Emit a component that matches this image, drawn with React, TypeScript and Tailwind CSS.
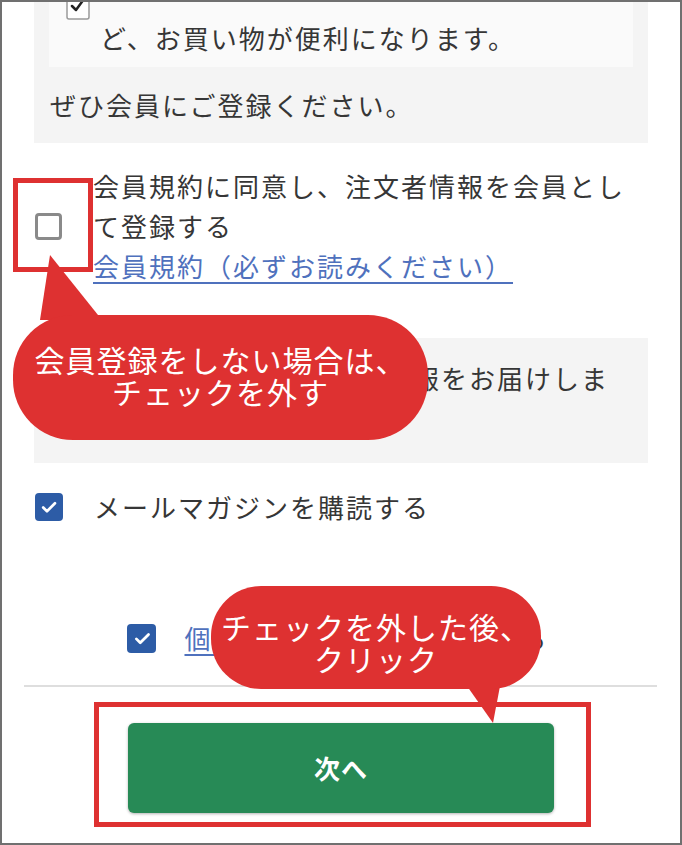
import type { ReactNode } from "react";

function CheckedBox({ size }: { size: string }) {
  return (
    <span className={`flex shrink-0 items-center justify-center rounded-[4px] bg-[#2d5ca6] ${size}`}>
      <svg viewBox="0 0 24 24" className="h-[72%] w-[72%]" fill="none" stroke="white" strokeWidth="3.2" strokeLinecap="round" strokeLinejoin="round">
        <path d="M5 12.5l4.5 4.5L19 7.5" />
      </svg>
    </span>
  );
}

function Callout({ className, children }: { className: string; children: ReactNode }) {
  return (
    <div
      className={`absolute flex flex-col items-center justify-center bg-[#de3131] text-center text-[30px] font-normal leading-[32px] tracking-[1px] text-white ${className}`}
    >
      {children}
    </div>
  );
}

export default function App() {
  return (
    <div className="relative h-[845px] w-[682px] overflow-hidden border-2 border-[#707070] bg-white font-['Noto_Sans_CJK_JP','Noto_Sans',sans-serif] text-[26px] leading-[40px] tracking-[2px] text-[#363636]">
      {/* member benefits box */}
      <section className="mx-[32px] -mt-[16px] bg-[#f4f4f4] px-[15px] pb-[18px]">
        <div className="bg-[#fafafa] pb-[9px] pt-[8px]">
          <div className="-mb-[2px] ml-[17px] h-[26px] w-[24px] overflow-hidden">
            <svg viewBox="0 0 24 26" className="h-[26px] w-[24px]" fill="none">
              <rect x="1" y="1" width="22" height="24" rx="2" fill="white" stroke="#9a9a9a" strokeWidth="1.5" />
              <path d="M6 12l4 4 8-11" stroke="#222" strokeWidth="2.5" strokeLinecap="round" strokeLinejoin="round" />
            </svg>
          </div>
          <p className="pl-[51px]">ど、お買い物が便利になります。</p>
        </div>
        <p className="mt-[18px] pl-[1px]">ぜひ会員にご登録ください。</p>
      </section>

      {/* member registration */}
      <div className="mt-[23px] flex items-center gap-[31px] pl-[33px]">
        <span className="h-[27px] w-[27px] shrink-0 rounded-[4px] border-[3px] border-[#8a8a8a] bg-white" />
        <div className="w-[545px]">
          <p>会員規約に同意し、注文者情報を会員として登録する</p>
          <a className="block w-fit text-[#4f71bd] underline decoration-[2px] underline-offset-[5px]">会員規約（必ずお読みください）</a>
        </div>
      </div>

      {/* mail magazine info */}
      <section className="mx-[32px] mt-[52px] bg-[#f4f4f4] px-[16px] pb-[25px] pt-[20px]">
        <p>メールマガジンで、お得な情報をお届けします。</p>
      </section>

      <div className="mt-[24px] flex items-center gap-[31px] pl-[33px]">
        <CheckedBox size="h-[28px] w-[28px]" />
        <p>メールマガジンを購読する</p>
      </div>

      <div className="mt-[91px] flex items-center justify-center gap-[28px] pr-[6px]">
        <CheckedBox size="h-[29px] w-[29px]" />
        <p>
          <a className="text-[#4f71bd] underline decoration-[2px] underline-offset-[5px]">個人情報の取扱い</a>
          に同意する
        </p>
      </div>

      <div className="ml-[22px] mr-[23px] mt-[27px] h-[2px] bg-[#dedede]" />

      <button
        type="button"
        className="mx-auto mt-[36px] flex h-[90px] w-[426px] items-center justify-center rounded-[6px] bg-[#278a56] text-[26px] font-bold tracking-[1px] text-white shadow-[0_1px_3px_rgba(0,0,0,0.3)]"
      >
        次へ
      </button>

      {/* annotations */}
      <div className="absolute left-[11px] top-[176px] h-[94px] w-[80px] border-[5px] border-[#de3131]" />
      <div className="absolute left-[92px] top-[700px] h-[125px] w-[497px] border-[5px] border-[#de3131]" />

      <svg className="pointer-events-none absolute left-0 top-0 h-[841px] w-[678px]" viewBox="0 0 678 841">
        <polygon points="38,318 48,253 100,318" fill="#de3131" />
        <polygon points="465,684 491,721 498,684" fill="#de3131" />
      </svg>

      <Callout className="left-[11px] top-[313px] h-[125px] w-[415px] rounded-[60px] pb-[6px]">
        <span>会員登録をしない場合は、</span>
        <span>チェックを外す</span>
      </Callout>

      <Callout className="left-[209px] top-[584px] h-[103px] w-[330px] rounded-[50px] pt-[8px]">
        <span>チェックを外した後、</span>
        <span>クリック</span>
      </Callout>
    </div>
  );
}
